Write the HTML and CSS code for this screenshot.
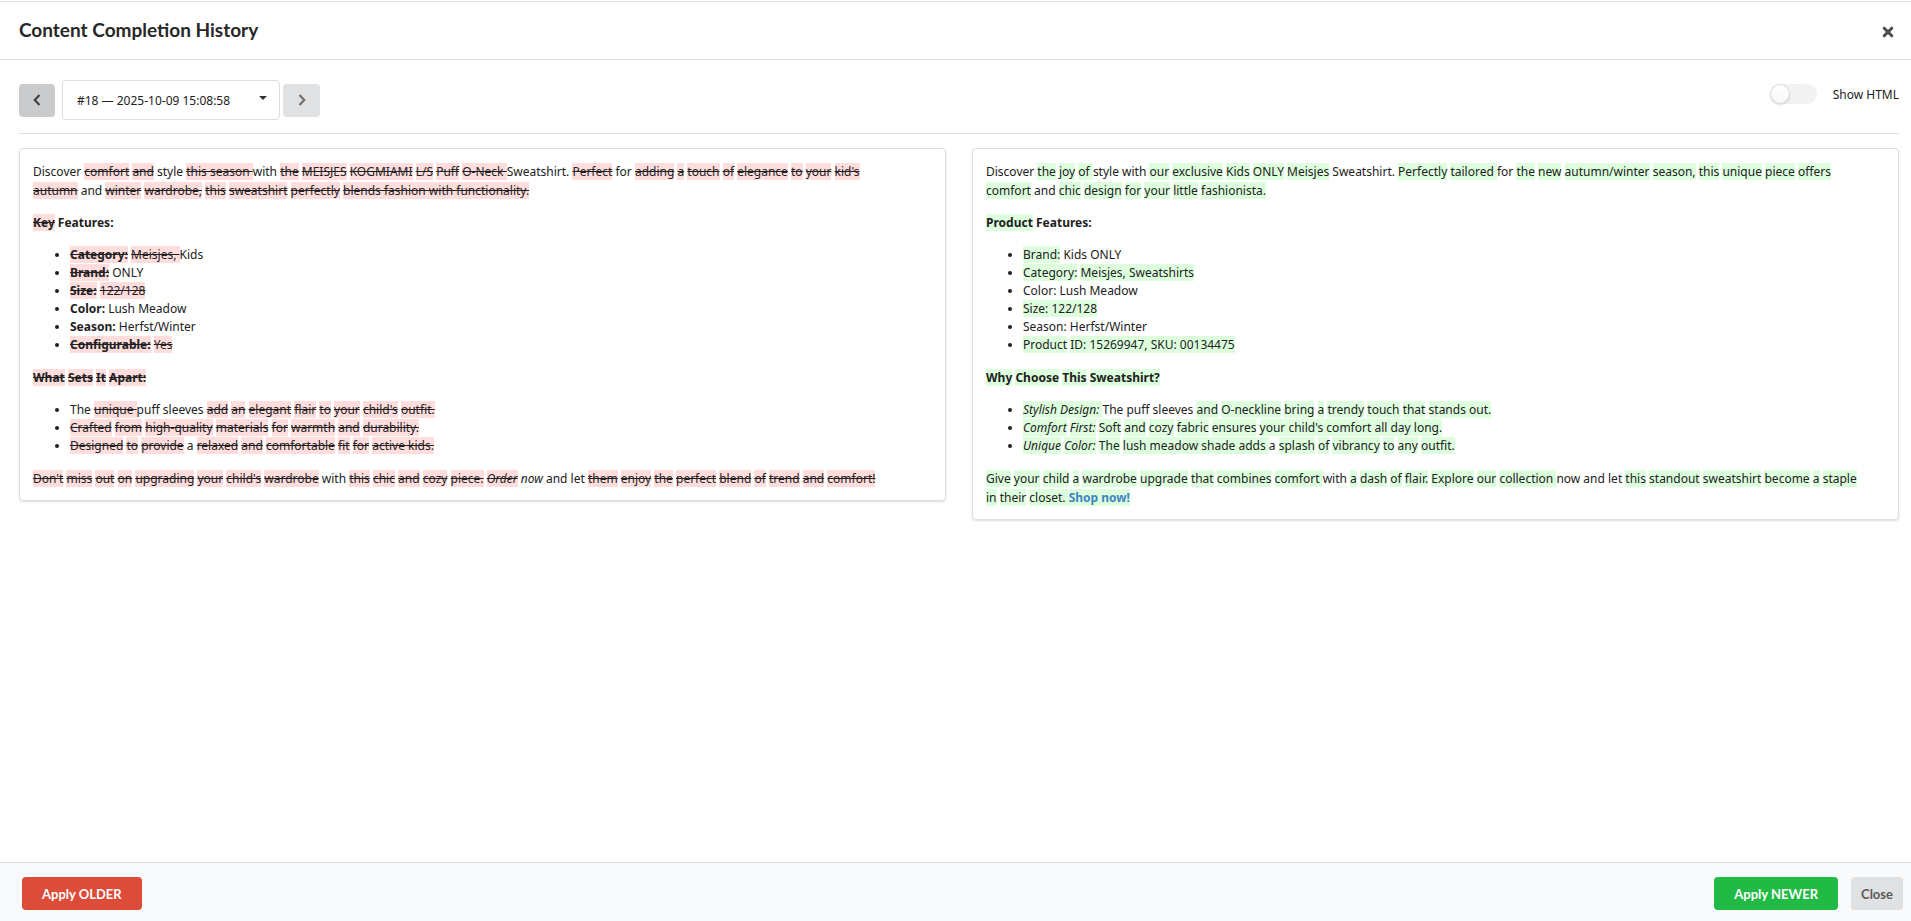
FILE: index.html
```html
<!DOCTYPE html>
<html lang="en">
<head>
    <meta charset="UTF-8">
    <meta name="viewport" content="width=device-width, initial-scale=1.0">
    <title>Content Completion History</title>
    <link rel="stylesheet" href="styles.css">
</head>
<body>
    <div class="modal">
        <header class="header">
            <h1>Content Completion History</h1>
            <button class="close-icon" type="button" aria-label="Close window">
                <svg width="12" height="12" viewBox="0 0 12 12"><path d="M2.2 2.2L9.8 9.8M9.8 2.2L2.2 9.8"/></svg>
            </button>
        </header>

        <main class="content">
            <div class="toolbar">
                <div class="pager">
                    <button class="nav prev" type="button" aria-label="Previous version">
                        <svg width="8" height="12" viewBox="0 0 8 12"><path d="M6.5 1L1.7 6L6.5 11"/></svg>
                    </button>
                    <div class="version">
                        <select aria-label="Version">
                            <option>#18 — 2025-10-09 15:08:58</option>
                        </select>
                        <svg class="caret" width="8" height="4" viewBox="0 0 8 4"><path d="M0 0H8L4 4Z"/></svg>
                    </div>
                    <button class="nav next" type="button" aria-label="Next version">
                        <svg width="8" height="12" viewBox="0 0 8 12"><path d="M1.5 1L6.3 6L1.5 11"/></svg>
                    </button>
                </div>
                <label class="toggle">
                    <input type="checkbox">
                    <span>Show HTML</span>
                </label>
            </div>

            <div class="compare">
                <!-- older version -->
                <section class="card card-old">
                    <p>Discover <del>comfort</del> <del>and</del> style <del>this season </del>with <del>the</del> <del>MEISJES</del> <del>KOGMIAMI</del> <del>L/S</del> <del>Puff</del> <del>O-Neck </del>Sweatshirt. <del>Perfect</del> for <del>adding</del> <del>a</del> <del>touch</del> <del>of</del> <del>elegance</del> <del>to</del> <del>your</del> <del>kid's</del> <del>autumn</del> and <del>winter</del> <del>wardrobe,</del> <del>this</del> <del>sweatshirt</del> <del>perfectly</del> <del>blends fashion with functionality.</del></p>
                    <p><strong><del>Key</del> Features:</strong></p>
                    <ul>
                        <li><strong><del>Category:</del></strong> <del>Meisjes, </del>Kids</li>
                        <li><strong><del>Brand:</del></strong> ONLY</li>
                        <li><strong><del>Size:</del></strong> <del>122/128</del></li>
                        <li><strong>Color:</strong> Lush Meadow</li>
                        <li><strong>Season:</strong> Herfst/Winter</li>
                        <li><strong><del>Configurable:</del></strong> <del>Yes</del></li>
                    </ul>
                    <p><strong><del>What</del> <del>Sets</del> <del>It</del> <del>Apart:</del></strong></p>
                    <ul>
                        <li>The <del>unique </del>puff sleeves <del>add</del> <del>an</del> <del>elegant</del> <del>flair</del> <del>to</del> <del>your</del> <del>child's</del> <del>outfit.</del></li>
                        <li><del>Crafted</del> <del>from</del> <del>high-quality</del> <del>materials</del> <del>for</del> <del>warmth</del> <del>and</del> <del>durability.</del></li>
                        <li><del>Designed</del> <del>to</del> <del>provide</del> a <del>relaxed</del> <del>and</del> <del>comfortable</del> <del>fit</del> <del>for</del> <del>active kids.</del></li>
                    </ul>
                    <p><del>Don't</del> <del>miss</del> <del>out</del> <del>on</del> <del>upgrading</del> <del>your</del> <del>child's</del> <del>wardrobe</del> with <del>this</del> <del>chic</del> <del>and</del> <del>cozy</del> <del>piece.</del> <em><del>Order</del> now</em> and let <del>them</del> <del>enjoy</del> <del>the</del> <del>perfect</del> <del>blend</del> <del>of</del> <del>trend</del> <del>and</del> <del>comfort!</del></p>
                </section>

                <!-- newer version -->
                <section class="card card-new">
                    <p>Discover <ins>the</ins> <ins>joy</ins> <ins>of </ins>style with <ins>our</ins> <ins>exclusive</ins> <ins>Kids</ins> <ins>ONLY</ins> <ins>Meisjes</ins> Sweatshirt. <ins>Perfectly</ins> <ins>tailored </ins>for <ins>the</ins> <ins>new</ins> <ins>autumn/winter</ins> <ins>season,</ins> <ins>this</ins> <ins>unique</ins> <ins>piece</ins> <ins>offers</ins> <ins>comfort</ins> and <ins>chic</ins> <ins>design</ins> <ins>for</ins> <ins>your</ins> <ins>little</ins> <ins>fashionista.</ins></p>
                    <p><strong><ins>Product</ins> Features:</strong></p>
                    <ul>
                        <li><ins>Brand:</ins> Kids ONLY</li>
                        <li><ins>Category:</ins> <ins>Meisjes, Sweatshirts</ins></li>
                        <li>Color: Lush Meadow</li>
                        <li><ins>Size: 122/128</ins></li>
                        <li>Season: Herfst/Winter</li>
                        <li><ins>Product</ins> <ins>ID: 15269947, SKU: 00134475</ins></li>
                    </ul>
                    <p><strong><ins>Why</ins> <ins>Choose</ins> <ins>This</ins> <ins>Sweatshirt?</ins></strong></p>
                    <ul>
                        <li><em><ins>Stylish Design: </ins></em>The puff sleeves <ins>and</ins> <ins>O-neckline</ins> <ins>bring</ins> <ins>a</ins> <ins>trendy</ins> <ins>touch</ins> <ins>that</ins> <ins>stands out.</ins></li>
                        <li><em><ins>Comfort</ins> <ins>First:</ins></em> <ins>Soft</ins> <ins>and</ins> <ins>cozy</ins> <ins>fabric</ins> <ins>ensures</ins> <ins>your child's comfort all day long.</ins></li>
                        <li><em><ins>Unique</ins> <ins>Color:</ins></em> <ins>The</ins> <ins>lush meadow shade adds </ins>a <ins>splash</ins> <ins>of</ins> <ins>vibrancy</ins> <ins>to</ins> <ins>any</ins> <ins>outfit.</ins></li>
                    </ul>
                    <p><ins>Give</ins> <ins>your</ins> <ins>child</ins> <ins>a</ins> <ins>wardrobe</ins> <ins>upgrade</ins> <ins>that</ins> <ins>combines</ins> <ins>comfort </ins>with <ins>a</ins> <ins>dash</ins> <ins>of</ins> <ins>flair.</ins> <ins>Explore</ins> <ins>our</ins> <ins>collection </ins>now and let <ins>this</ins> <ins>standout</ins> <ins>sweatshirt</ins> <ins>become</ins> <ins>a</ins> <ins>staple</ins> <ins>in</ins> <ins>their</ins> <ins>closet. <a href="#"><strong>Shop now!</strong></a></ins></p>
                </section>
            </div>
        </main>

        <footer class="footer">
            <button class="btn older" type="button">Apply OLDER</button>
            <div class="right">
                <button class="btn newer" type="button">Apply NEWER</button>
                <button class="btn close" type="button">Close</button>
            </div>
        </footer>
    </div>
</body>
</html>
```
FILE: styles.css
```css
*{
    box-sizing:border-box;
}
body{
    margin:0;
    background:#fff;
    color:#212121;
    font-family:"Noto Sans", "Open Sans", sans-serif;
    font-size:12px;
    line-height:19px;
}
button, select{
    font-family:inherit;
    font-size:inherit;
    cursor:pointer;
}
.modal{
    display:flex;
    flex-direction:column;
    min-height:100vh;
    padding-top:1px;
}
.header{
    display:flex;
    align-items:center;
    justify-content:space-between;
    height:59px;
    padding:0 16px 0 19px;
    border-top:1px solid #dededf;
    border-bottom:1px solid #dededf;
}
.header h1{
    margin:0;
    padding-bottom:2px;
    font-family:Lato, sans-serif;
    font-size:19px;
    line-height:24px;
    font-weight:700;
    color:#272727;
}
.close-icon{
    display:flex;
    padding:2px 1px 0;
    border:0;
    background:none;
}
.close-icon svg{
    fill:none;
    stroke:#4a4a4a;
    stroke-width:3;
    stroke-linecap:round;
}
.content{
    flex:1;
    padding:20px 12px 20px 19px;
}
.toolbar{
    display:flex;
    align-items:flex-start;
    justify-content:space-between;
    padding-bottom:13px;
    border-bottom:1px solid #dededf;
}
.pager{
    display:flex;
    align-items:center;
}
.nav{
    display:flex;
    align-items:center;
    justify-content:center;
    width:36px;
    height:33px;
    padding:0;
    border:0;
    border-radius:4px;
}
.nav svg{
    fill:none;
    stroke-width:2;
}
.prev{
    background:#cacbcd;
    margin-right:7px;
}
.prev svg{
    stroke:#3c3c3d;
}
.next{
    width:37px;
    background:#e0e1e2;
    margin-left:3px;
}
.next svg{
    stroke:#6b6b6b;
}
.version{
    position:relative;
}
.version select{
    appearance:none;
    width:218px;
    height:40px;
    padding:0 36px 0 14px;
    border:1px solid #dededf;
    border-radius:4px;
    background:#fff;
    color:#212121;
}
.caret{
    position:absolute;
    top:16px;
    right:13px;
    fill:#333;
    pointer-events:none;
}
.toggle{
    display:flex;
    align-items:center;
    gap:16px;
    margin-top:4px;
    cursor:pointer;
}
.toggle input{
    appearance:none;
    display:flex;
    width:47px;
    height:20px;
    margin:0;
    border-radius:10px;
    background:#f2f2f2;
    cursor:pointer;
}
.toggle input::before{
    content:"";
    width:20px;
    height:20px;
    border-radius:50%;
    background:linear-gradient(#fff, #f7f7f7);
    box-shadow:0 1px 2px rgba(34,36,38,0.15), inset 0 0 0 1px rgba(34,36,38,0.15);
}
.toggle input:checked{
    background:#2185d0;
}
.toggle input:checked::before{
    margin-left:27px;
}
.compare{
    display:grid;
    grid-template-columns:1fr 1fr;
    align-items:start;
    gap:26px;
    margin-top:14px;
}
.card{
    padding:13px 13px 12px;
    border:1px solid #dededf;
    border-radius:4px;
    box-shadow:0 1px 2px rgba(34,36,38,0.15);
}
.card-old{
    padding-right:42px;
}
.card-new{
    padding-right:36px;
}
.card p{
    margin:0 0 13px;
}
.card p:last-child{
    margin-bottom:0;
}
.card ul{
    margin:14px 0;
    padding-left:37px;
    line-height:18px;
}
.card del, .card ins{
    text-decoration:none;
}
.card del{
    background:#ffdddd;
    text-decoration:line-through;
}
.card ins{
    background:#ddffdd;
}
.card a{
    color:#4183c4;
    text-decoration:none;
}
.footer{
    display:flex;
    align-items:center;
    justify-content:space-between;
    height:59px;
    padding:3px 8px 0 22px;
    border-top:1px solid #d4d7dc;
    background:#f9fafb;
}
.right{
    display:flex;
    gap:13px;
}
.btn{
    height:33px;
    padding:0 20px;
    border:0;
    border-radius:4px;
    font-family:Lato, sans-serif;
    font-size:13px;
    font-weight:700;
    color:#fff;
}
.older{
    background:#dd4b39;
}
.newer{
    background:#21ba45;
}
.close{
    padding:0 10px;
    background:#e0e1e2;
    color:#5a5a5a;
}
```
